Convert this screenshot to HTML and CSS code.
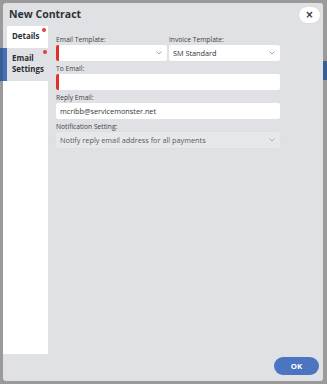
FILE: index.html
```html
<!DOCTYPE html>
<html lang="en">
<head>
<meta charset="utf-8">
<title>New Contract</title>
<link rel="stylesheet" href="styles.css">
</head>
<body>
<div class="backdrop-strip strip-left"></div>
<div class="backdrop-strip strip-right"></div>
<div class="modal">
  <div class="modal-header">
    <h1 class="modal-title">New Contract</h1>
    <button class="close-btn" type="button">&times;</button>
  </div>
  <div class="modal-body">
    <nav class="sidebar">
      <div class="tab tab-active">Details<span class="dot"></span></div>
      <div class="tab tab-hover">Email<br>Settings<span class="dot"></span></div>
      <div class="sidebar-fill"></div>
    </nav>
    <div class="content">
      <div class="row">
        <div class="field half">
          <div class="label">Email Template:</div>
          <div class="control required"><span class="value"></span><svg class="chev" viewBox="0 0 6 4" width="6" height="4"><path d="M0.5 0.5 L3 3 L5.5 0.5" fill="none" stroke="#8a8d92" stroke-width="0.8"/></svg></div>
        </div>
        <div class="field half">
          <div class="label">Invoice Template:</div>
          <div class="control"><span class="value">SM Standard</span><svg class="chev" viewBox="0 0 6 4" width="6" height="4"><path d="M0.5 0.5 L3 3 L5.5 0.5" fill="none" stroke="#8a8d92" stroke-width="0.8"/></svg></div>
        </div>
      </div>
      <div class="field">
        <div class="label">To Email:</div>
        <div class="control required"><span class="value"></span></div>
      </div>
      <div class="field">
        <div class="label">Reply Email:</div>
        <div class="control"><span class="value">mcribb@servicemonster.net</span></div>
      </div>
      <div class="field">
        <div class="label">Notification Setting:</div>
        <div class="control disabled"><span class="value">Notify reply email address for all payments</span><svg class="chev" viewBox="0 0 6 4" width="6" height="4"><path d="M0.5 0.5 L3 3 L5.5 0.5" fill="none" stroke="#9a9da2" stroke-width="0.8"/></svg></div>
      </div>
    </div>
  </div>
  <div class="modal-footer">
    <button class="ok-btn" type="button">OK</button>
  </div>
</div>
</body>
</html>
```
FILE: styles.css
```css
* { box-sizing: border-box; }
html, body { margin: 0; padding: 0; }
body {
  width: 327px;
  height: 384px;
  background: #9a9a9a;
  font-family: "Open Sans", "Liberation Sans", sans-serif;
  color: #333;
  position: relative;
  overflow: hidden;
  padding: 3px;
}
.backdrop-strip { position: absolute; background: #3b5d94; }
.strip-left { left: 0; top: 48px; width: 3px; height: 33px; }
.strip-right { right: 0; top: 61px; width: 4px; height: 19px; }
.modal {
  position: relative;
  width: 320px;
  height: 378px;
  background: #dfe1e4;
  border-radius: 3px;
  display: flex;
  flex-direction: column;
}
.modal-header {
  height: 23px;
  display: flex;
  align-items: flex-start;
  justify-content: space-between;
  padding: 0 3px 0 6px;
}
.modal-title {
  margin: 0;
  font-size: 10.5px;
  font-weight: 700;
  line-height: 16px;
  padding-top: 3px;
  color: #2f3237;
}
.close-btn {
  margin-top: 4px;
  width: 21px;
  height: 16px;
  border: none;
  border-radius: 8px;
  background: #fff;
  font-family: "DejaVu Sans", sans-serif;
  font-weight: 700;
  font-size: 10px;
  line-height: 16px;
  padding: 0;
  color: #333;
  box-shadow: 0 0 1px rgba(0,0,0,0.15);
}
.modal-body {
  flex: 1;
  display: flex;
}
.sidebar {
  width: 45px;
  display: flex;
  flex-direction: column;
}
.tab {
  position: relative;
  font-size: 7.9px;
  font-weight: 700;
  color: #2a2d32;
  line-height: 11px;
}
.tab-active {
  margin-left: 4px;
  height: 22px;
  background: #fff;
  padding: 5px 0 0 5px;
}
.tab-hover {
  height: 33px;
  border-left: 4px solid #4470b8;
  padding: 5px 0 0 5px;
}
.dot {
  position: absolute;
  width: 4px;
  height: 4px;
  border-radius: 50%;
  background: #e0403a;
}
.tab-active .dot { top: 2px; right: 2px; }
.tab-hover .dot { top: 2px; right: 1px; }
.sidebar-fill { flex: 1; background: #fff; }
.content {
  width: 224px;
  margin-left: 8px;
  padding-top: 6.5px;
  display: flex;
  flex-direction: column;
  gap: 1px;
}
.row { display: flex; gap: 2px; }
.field { display: flex; flex-direction: column; }
.half { flex: 1; }
.label {
  font-size: 6.7px;
  line-height: 10px;
  padding-top: 2px;
  color: #3f4247;
  height: 12px;
}
.control {
  height: 16px;
  background: #fff;
  border-radius: 2px;
  display: flex;
  align-items: center;
  padding: 0 5px 0 4px;
  font-size: 7.3px;
  color: #2f3237;
}
.control .value { flex: 1; white-space: nowrap; overflow: hidden; }
.required { border-left: 3px solid #e0322b; }
.disabled { background: #e7e8ea; color: #575a5f; padding-left: 4px; box-shadow: 0 0 0 0.5px #dcdee1; }
.chev { flex: none; }
.modal-footer {
  height: 27px;
  display: flex;
  justify-content: flex-end;
  align-items: flex-start;
  padding: 3px 4px 0 0;
}
.ok-btn {
  width: 45px;
  height: 18px;
  border: none;
  border-radius: 9px;
  background: #4b74c1;
  color: #fff;
  font-family: "Open Sans", "Liberation Sans", sans-serif;
  font-weight: 700;
  font-size: 7.8px;
  padding: 0;
}
```
